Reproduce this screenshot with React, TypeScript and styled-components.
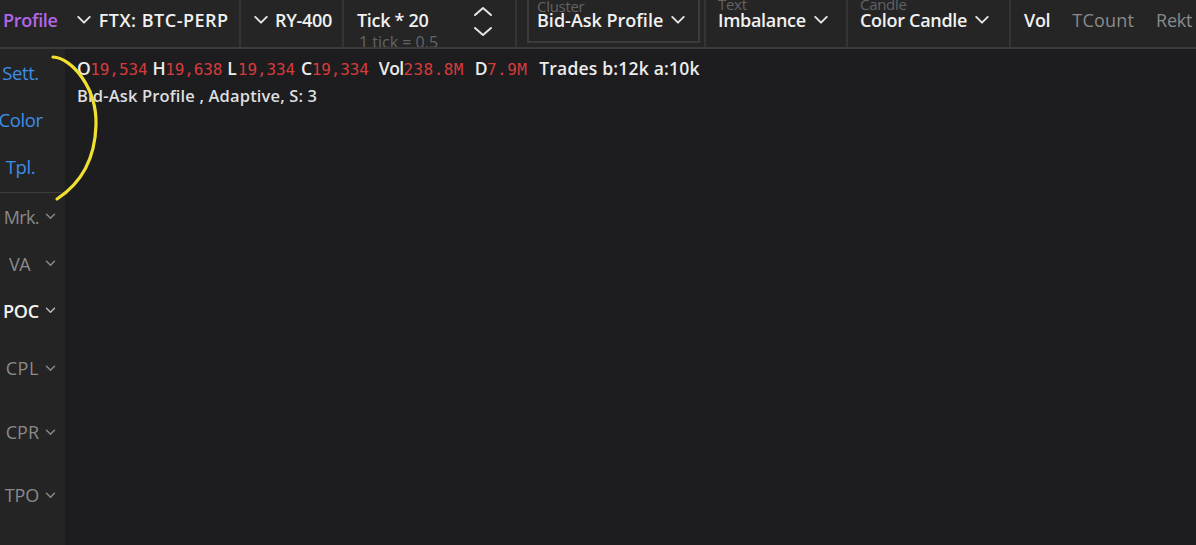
import React from "react";
import styled, { createGlobalStyle } from "styled-components";

const Global = createGlobalStyle`
  html, body { margin: 0; padding: 0; background: #1d1d1f; }
  body { font-family: "Open Sans", "Noto Sans", sans-serif; overflow: hidden; }
`;

const Page = styled.div`
  position: relative;
  width: 1196px;
  height: 545px;
  display: flex;
  flex-direction: column;
  overflow: hidden;
  background: #1d1d1f;
`;

const TopBar = styled.div`
  height: 47px;
  flex: none;
  display: flex;
  align-items: stretch;
  background: #252526;
  border-bottom: 2px solid #3a3a3b;
  box-sizing: content-box;
  overflow: hidden;
  white-space: nowrap;
`;

const Seg = styled.div<{ $w: number; $pl?: number; $gap?: number; $noBorder?: boolean }>`
  flex: none;
  width: ${(p) => p.$w}px;
  box-sizing: border-box;
  padding-left: ${(p) => p.$pl ?? 12}px;
  display: flex;
  align-items: center;
  gap: ${(p) => p.$gap ?? 8}px;
  border-right: ${(p) => (p.$noBorder ? "none" : "2px solid #343435")};
  position: relative;
`;

const BarText = styled.span<{ $c?: string; $bold?: boolean; $ls?: number }>`
  font-size: 18px;
  font-weight: ${(p) => (p.$bold === false ? 400 : 600)};
  letter-spacing: ${(p) => p.$ls ?? -0.3}px;
  color: ${(p) => p.$c ?? "#f1f1f1"};
  line-height: 1;
  margin-top: -8px;
`;

const Chev = ({ size = 16, color = "#e6e6e6", sw = 2 }: { size?: number; color?: string; sw?: number }) => (
  <svg width={size} height={size * 0.6} viewBox="0 0 16 10" fill="none">
    <path d="M2 2 L8 8 L14 2" stroke={color} strokeWidth={sw} strokeLinecap="round" strokeLinejoin="round" />
  </svg>
);

const ChevWrap = styled.span<{ $ml?: number; $mr?: number }>`
  display: inline-flex;
  margin-top: -8px;
  margin-left: ${(p) => p.$ml ?? 0}px;
  margin-right: ${(p) => p.$mr ?? 0}px;
`;

const TickCol = styled.div`
  display: flex;
  flex-direction: column;
  position: relative;
  height: 100%;
  justify-content: center;
`;

const SubLabel = styled.span`
  position: absolute;
  left: 2px;
  top: 34px;
  font-size: 16px;
  color: #646465;
  letter-spacing: 0px;
  line-height: 1;
`;

const Arrows = styled.div`
  position: absolute;
  left: 128px;
  top: 0;
  height: 100%;
  display: flex;
  flex-direction: column;
  gap: 9px;
  padding-top: 5px;
  box-sizing: border-box;
`;

const Box = styled.div`
  position: relative;
  width: 173px;
  height: 46px;
  margin-top: -3px;
  box-sizing: border-box;
  border: 2px solid #3b3b3c;
  align-self: flex-start;
  display: flex;
  align-items: center;
  padding-left: 8px;
  gap: 7px;
`;

const TinyLabel = styled.span`
  position: absolute;
  left: 8px;
  top: 0px;
  font-size: 15px;
  color: #626263;
  letter-spacing: -0.3px;
  line-height: 1;
`;

const Labeled = styled.div`
  position: relative;
  display: flex;
  align-items: center;
  gap: 7px;
  height: 100%;
`;

const TinyLabelFree = styled(TinyLabel)`
  left: 0;
  top: -3px;
`;

const Body = styled.div`
  flex: 1;
  display: flex;
  min-height: 0;
`;

const Sidebar = styled.div`
  width: 65px;
  flex: none;
  background: #242425;
  display: flex;
  flex-direction: column;
`;

const SideTop = styled.div<{ $h: number }>`
  height: ${(p) => p.$h}px;
  width: 41px;
  display: flex;
  align-items: center;
  justify-content: center;
  font-size: 18.5px;
  letter-spacing: -0.4px;
  color: #3d8ee6;
`;

const SideDivider = styled.div`
  height: 1px;
  width: 62px;
  background: #3d3d3e;
  margin-top: 2px;
`;

const SideItem = styled.div<{ $h: number; $active?: boolean; $ls?: number }>`
  height: ${(p) => p.$h}px;
  display: flex;
  align-items: center;
  justify-content: flex-end;
  gap: 6px;
  padding-right: 9px;
  font-size: 18px;
  letter-spacing: ${(p) => p.$ls ?? -0.6}px;
  font-weight: ${(p) => (p.$active ? 600 : 400)};
  color: ${(p) => (p.$active ? "#f2f2f2" : "#8a8a8a")};
`;

const Spacer = styled.span<{ $w: number }>`
  display: inline-block;
  width: ${(p) => p.$w}px;
`;

const Main = styled.div`
  flex: 1;
  padding: 8px 0 0 12px;
  display: flex;
  flex-direction: column;
  gap: 4px;
`;

const Line = styled.div`
  display: flex;
  align-items: baseline;
  font-size: 17.5px;
  line-height: 22px;
  white-space: nowrap;
`;

const K = styled.span<{ $ml?: number; $ls?: number }>`
  color: #ececec;
  font-weight: 600;
  margin-left: ${(p) => p.$ml ?? 0}px;
  letter-spacing: ${(p) => p.$ls ?? -0.5}px;
`;

const V = styled.span<{ $ls?: number }>`
  color: #d63b3b;
  font-family: "DejaVu Sans Mono", "Liberation Mono", monospace;
  font-size: 16px;
  font-weight: 400;
  letter-spacing: ${(p) => p.$ls ?? -0.1}px;
`;

const Info = styled.div`
  font-size: 16.5px;
  color: #dedede;
  font-weight: 600;
  letter-spacing: 0.15px;
  line-height: 22px;
`;

const Annotation = styled.svg`
  position: absolute;
  left: 0;
  top: 0;
  pointer-events: none;
`;

export default function App() {
  return (
    <Page>
      <Global />
      <TopBar>
        <Seg $w={241} $pl={3} $gap={0}>
          <BarText $c="#b466e6">Profile</BarText>
          <ChevWrap $ml={18} $mr={7}>
            <Chev />
          </ChevWrap>
          <BarText $ls={0.5}>FTX: BTC-PERP</BarText>
        </Seg>
        <Seg $w={103} $pl={12} $gap={6}>
          <ChevWrap>
            <Chev />
          </ChevWrap>
          <BarText>RY-400</BarText>
        </Seg>
        <Seg $w={173} $pl={13}>
          <TickCol>
            <BarText>Tick * 20</BarText>
            <SubLabel>1 tick = 0.5</SubLabel>
          </TickCol>
          <Arrows>
            <svg width="22" height="12" viewBox="0 0 22 12" fill="none">
              <path d="M3 10 L11 3 L19 10" stroke="#e4e4e4" strokeWidth="2" strokeLinecap="round" strokeLinejoin="round" />
            </svg>
            <svg width="22" height="12" viewBox="0 0 22 12" fill="none">
              <path d="M3 2 L11 9 L19 2" stroke="#e4e4e4" strokeWidth="2" strokeLinecap="round" strokeLinejoin="round" />
            </svg>
          </Arrows>
        </Seg>
        <Seg $w={189} $pl={10}>
          <Box>
            <TinyLabel>Cluster</TinyLabel>
            <BarText style={{ marginTop: 0 }} $ls={0}>Bid-Ask Profile</BarText>
            <ChevWrap style={{ marginTop: 0 }}>
              <Chev />
            </ChevWrap>
          </Box>
        </Seg>
        <Seg $w={142} $pl={12}>
          <Labeled>
            <TinyLabelFree>Text</TinyLabelFree>
            <BarText>Imbalance</BarText>
            <ChevWrap>
              <Chev />
            </ChevWrap>
          </Labeled>
        </Seg>
        <Seg $w={163} $pl={12}>
          <Labeled>
            <TinyLabelFree>Candle</TinyLabelFree>
            <BarText>Color Candle</BarText>
            <ChevWrap>
              <Chev />
            </ChevWrap>
          </Labeled>
        </Seg>
        <Seg $w={200} $pl={13} $gap={22} $noBorder>
          <BarText>Vol</BarText>
          <BarText $c="#8a8a8a" $bold={false} $ls={0.2}>TCount</BarText>
          <BarText $c="#8a8a8a" $bold={false}>Rekt</BarText>
        </Seg>
      </TopBar>
      <Body>
        <Sidebar>
          <SideTop $h={47}>Sett.</SideTop>
          <SideTop $h={47}>Color</SideTop>
          <SideTop $h={47}>Tpl.</SideTop>
          <SideDivider />
          <SideItem $h={47}>
            Mrk. <Chev size={11} color="#8a8a8a" sw={2.2} />
          </SideItem>
          <SideItem $h={47}>
            VA <Spacer $w={3} /> <Chev size={11} color="#8a8a8a" sw={2.2} />
          </SideItem>
          <SideItem $h={47} $active $ls={-0.2}>
            POC <Chev size={11} color="#bdbdbd" sw={2.2} />
          </SideItem>
          <SideItem $h={68} $ls={0.6}>
            CPL <Chev size={11} color="#8a8a8a" sw={2.2} />
          </SideItem>
          <SideItem $h={60} $ls={0}>
            CPR <Chev size={11} color="#8a8a8a" sw={2.2} />
          </SideItem>
          <SideItem $h={66} $ls={-0.2}>
            TPO <Chev size={11} color="#8a8a8a" sw={2.2} />
          </SideItem>
        </Sidebar>
        <Main>
          <Line>
            <K>O</K>
            <V>19,534</V>
            <K $ml={5}>H</K>
            <V>19,638</V>
            <K $ml={5} $ls={1}>L</K>
            <V>19,334</V>
            <K $ml={6}>C</K>
            <V>19,334</V>
            <K $ml={10} $ls={-0.6}>Vol</K>
            <V $ls={0.4}>238.8M</V>
            <K $ml={11}>D</K>
            <V $ls={0.4}>7.9M</V>
            <K $ml={12} $ls={0.2}>Trades b:12k a:10k</K>
          </Line>
          <Info>Bid-Ask Profile , Adaptive, S: 3</Info>
        </Main>
      </Body>
      <Annotation width="1196" height="545" viewBox="0 0 1196 545">
        <path
          d="M53 57 C 72 58, 97 88, 96 125 C 95 160, 80 184, 57 199"
          stroke="#f0e130"
          strokeWidth="3.2"
          fill="none"
          strokeLinecap="round"
        />
      </Annotation>
    </Page>
  );
}
